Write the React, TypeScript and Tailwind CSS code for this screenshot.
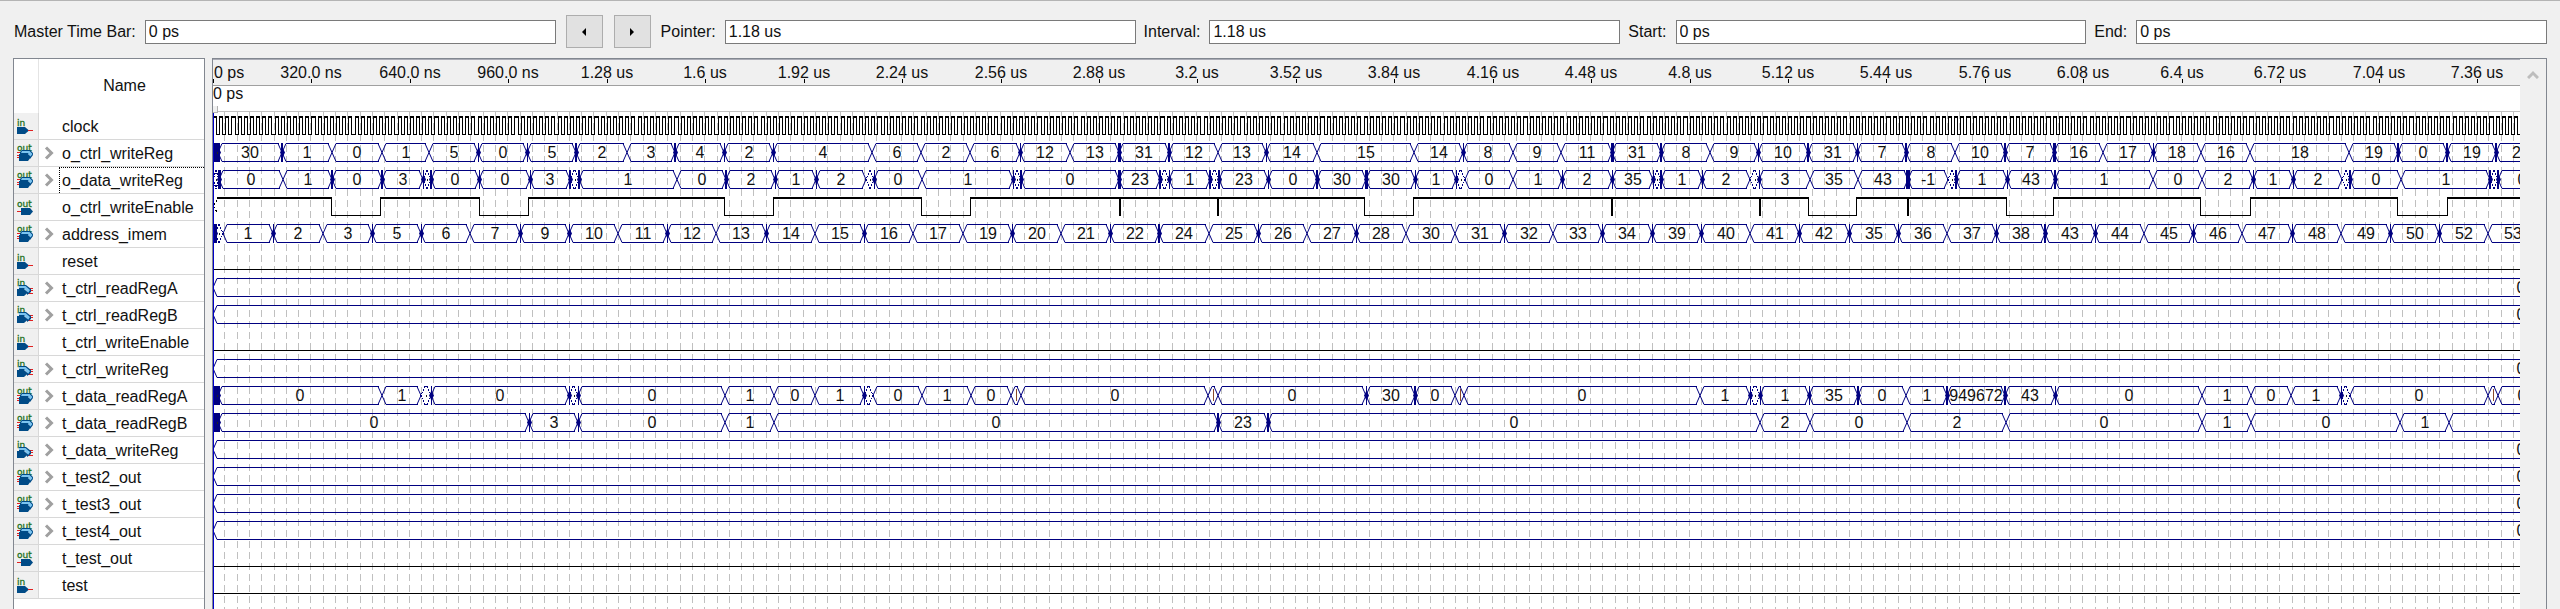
import React from "react";

type Dir = "in" | "out";
type Signal = {
  name: string;
  dir: Dir;
  bus?: boolean;
  wave: "clock" | "low" | "enable" | "bus";
  data?: string;
};

// Bus data alternates between transitions and values.
// "282:2" is a transition at x=282 with a burst of glitches 2 px wide.
// "*" is a value too narrow to show, "|" is a value cut down to one stroke.
const CONSTANT = "213 _ 2518 0 2524";

const SIGNALS: Signal[] = [
  { name: "clock", dir: "in", wave: "clock" },
  {
    name: "o_ctrl_writeReg",
    dir: "out",
    bus: true,
    wave: "bus",
    data: "215:3 * 218:3 30 282:2 1 332 0 382 1 429 5 478:1 0 527:1 5 576:2 2 627 3 675:2 4 724:1 2 773:1 4 872 6 921 2 970 6 1020:1 12 1070 13 1119:3 31 1169:2 12 1218 13 1266:1 14 1317 15 1414 14 1463:1 8 1513 9 1561 11 1612:3 31 1661:2 8 1710 9 1758:1 10 1808:2 31 1857:1 7 1906:2 8 1955 10 2005:2 7 2054:3 16 2103 17 2153:1 18 2201 16 2250 18 2349 19 2398:2 0 2447:2 19 2496:2 20 2545",
  },
  {
    name: "o_data_writeReg",
    dir: "out",
    bus: true,
    wave: "bus",
    data: "213 * 219:3 0 283 1 332:2 0 382:2 3 423:1 * 431:2 0 479:1 0 530:1 3 570:2 * 579:2 1 677 0 726:2 2 775:1 1 816:1 2 866 * 874:1 0 922 1 1013:1 * 1021:2 0 1119:3 23 1160:2 * 1169:1 1 1210:2 * 1219:2 23 1268:1 0 1317:2 30 1366:3 30 1415:1 1 1456:1 * 1465 0 1513 1 1562:1 2 1612:1 35 1653:1 * 1661:2 1 1702:1 2 1750 * 1759:1 3 1810 35 1858 43 1908:4 -1 1948 * 1956:2 1 2007:1 43 2055:2 1 2153 0 2202 2 2253:1 1 2293:1 2 2342 * 2350:2 0 2401 1 2490:2 * 2498:2 0 2546",
  },
  { name: "o_ctrl_writeEnable", dir: "out", wave: "enable" },
  {
    name: "address_imem",
    dir: "out",
    bus: true,
    wave: "bus",
    data: "215:3 * 223 1 273:1 2 323 3 372:1 5 421:1 6 470 7 520:1 9 569:1 10 618 11 667:1 12 716 13 766:1 14 815 15 864:1 16 913 17 963 19 1012:1 20 1061 21 1110:1 22 1159:2 24 1209 25 1258:1 26 1307 27 1356:1 28 1406 30 1455 31 1504:1 32 1553 33 1602:1 34 1652:1 39 1701:1 40 1750 41 1799:1 42 1849:1 35 1898:1 36 1947 37 1996:1 38 2045:2 43 2095:1 44 2144 45 2193:1 46 2242 47 2292:1 48 2341 49 2390:1 50 2439:1 52 2488 53 2537",
  },
  { name: "reset", dir: "in", wave: "low" },
  { name: "t_ctrl_readRegA", dir: "in", bus: true, wave: "bus", data: CONSTANT },
  { name: "t_ctrl_readRegB", dir: "in", bus: true, wave: "bus", data: CONSTANT },
  { name: "t_ctrl_writeEnable", dir: "in", wave: "low" },
  { name: "t_ctrl_writeReg", dir: "in", bus: true, wave: "bus", data: CONSTANT },
  {
    name: "t_data_readRegA",
    dir: "out",
    bus: true,
    wave: "bus",
    data: "215:3 * 218:3 0 382 1 421 * 431:1 0 569:1 * 578:1 0 725 1 774 0 815 1 864:1 * 873 0 922 1 971 0 1011 | 1021 0 1208 | 1218 0 1366:1 30 1415:2 0 1455 | 1464 0 1700 1 1750:1 * 1760:1 1 1809:1 35 1858:2 0 1906 1 1947:2 949672 2005:2 43 2055:1 0 2202 1 2251 0 2291 1 2341:1 * 2350 0 2488 | 2498 0 2546",
  },
  {
    name: "t_data_readRegB",
    dir: "out",
    bus: true,
    wave: "bus",
    data: "215:3 * 218:3 0 529:1 3 578:1 0 725 1 774 0 1218:2 23 1268:2 0 1760 2 1810 0 1907 2 2006 0 2202 1 2251 0 2400 1 2449 _ 2700",
  },
  { name: "t_data_writeReg", dir: "in", bus: true, wave: "bus", data: CONSTANT },
  { name: "t_test2_out", dir: "out", bus: true, wave: "bus", data: CONSTANT },
  { name: "t_test3_out", dir: "out", bus: true, wave: "bus", data: CONSTANT },
  { name: "t_test4_out", dir: "out", bus: true, wave: "bus", data: CONSTANT },
  { name: "t_test_out", dir: "out", wave: "low" },
  { name: "test", dir: "in", wave: "low" },
];

const ORIGIN = 213;
const ROW = 27;
const HI = 4;
const LO = 22;
const END = 2700;
const STEP = 98.44; // pixels for 320 ns
const NAVY = "#000080";
const FONT = "'Liberation Sans', Arial, sans-serif";

const TIMES = [
  "0 ps", "320.0 ns", "640.0 ns", "960.0 ns", "1.28 us", "1.6 us", "1.92 us", "2.24 us",
  "2.56 us", "2.88 us", "3.2 us", "3.52 us", "3.84 us", "4.16 us", "4.48 us", "4.8 us",
  "5.12 us", "5.44 us", "5.76 us", "6.08 us", "6.4 us", "6.72 us", "7.04 us", "7.36 us",
];

// Intervals in which the write enable is low.
const ENABLE_LOW = [
  [331, 380], [479, 528], [724, 773], [921, 970], [1119, 1119], [1217, 1218], [1364, 1413],
  [1611, 1611], [1759, 1759], [1808, 1856], [1907, 1907], [2006, 2053], [2200, 2250], [2397, 2447],
];

function BusWave({ data, y }: { data: string; y: number }) {
  const tokens = data.split(" ");
  const edges: { x: number; w: number }[] = [];
  const values: string[] = [];
  tokens.forEach((t, i) => {
    if (i % 2 === 0) {
      const [x, w] = t.split(":");
      edges.push({ x: Number(x) - ORIGIN, w: w ? Number(w) : 0 });
    } else values.push(t);
  });
  const constant = values[0] === "_";
  if (constant) edges[1].x = END;
  const hi = y + HI + 0.5;
  const lo = y + LO + 0.5;
  const mid = (hi + lo) / 2;
  let rails = "";
  let slopes = "";
  let dotted = "";
  values.forEach((v, i) => {
    if (constant && i > 0) return;
    const a = edges[i].x;
    const b = edges[i + 1].x;
    const s = Math.min(4, (b - a) / 2);
    rails += `M${a + s} ${hi}H${b - s + 1}M${a + s} ${lo}H${b - s + 1}`;
    const ends = `M${a + s} ${hi}L${a} ${mid}L${a + s} ${lo}M${b - s} ${hi}L${b} ${mid}L${b - s} ${lo}`;
    if (v === "*") dotted += ends;
    else slopes += ends;
  });
  return (
    <g>
      <g fill="none" stroke={NAVY} shapeRendering="crispEdges">
        <path d={rails} />
        <path d={dotted} strokeDasharray="2 1" />
      </g>
      <path d={slopes} fill="none" stroke={NAVY} />
      {edges.map((e, i) =>
        e.w > 0 ? (
          <g key={i} fill={NAVY}>
            <rect x={e.x - Math.floor(e.w / 2)} y={y + HI} width={e.w} height={LO - HI + 1} shapeRendering="crispEdges" />
            <path d={`M${e.x - 2} ${mid}L${e.x + 0.5} ${mid - 5}L${e.x + 3} ${mid}L${e.x + 0.5} ${mid + 5}Z`} />
          </g>
        ) : null,
      )}
      {values.map((v, i) => {
        if (v === "_") return null;
        if (constant)
          return (
            <text key={i} x={2521 - ORIGIN} y={y + 19} textAnchor="middle">
              {v}
            </text>
          );
        const c = Math.round((edges[i].x + edges[i + 1].x) / 2);
        if (v === "*") return <rect key={i} x={c} y={y + 13} width="1" height="2" fill="#222" />;
        if (v === "|") return <rect key={i} x={c} y={y + 7} width="1" height="12" fill="#8a4a2a" />;
        return (
          <text key={i} x={c} y={y + 19} textAnchor="middle">
            {v}
          </text>
        );
      })}
    </g>
  );
}

function ClockWave({ y }: { y: number }) {
  let tops = "M0 0";
  let edges = "M0 0";
  const hi = y + HI;
  const lo = y + LO;
  const half = STEP / 32;
  for (let k = 0; k < 800; k += 2) {
    const a = Math.round(k * half);
    const b = Math.round((k + 1) * half);
    const c = Math.round((k + 2) * half);
    tops += `M${a} ${hi + 1}H${b + 1}`;
    edges += `M${b + 0.5} ${hi}V${lo + 0.5}H${c + 0.5}V${hi}`;
  }
  return (
    <g fill="none" stroke="#000" shapeRendering="crispEdges">
      <path d={tops} strokeWidth="2" />
      <path d={edges} />
    </g>
  );
}

function EnableWave({ y }: { y: number }) {
  const hi = y + HI;
  const lo = y + LO + 0.5;
  let tops = `M4 ${hi + 1}`;
  let edges = "";
  ENABLE_LOW.forEach(([p, q]) => {
    const a = p - ORIGIN;
    const b = q - ORIGIN + (p === q ? 1 : 0);
    tops += `H${a + 1}M${b} ${hi + 1}`;
    edges += `M${a + 0.5} ${hi}V${lo}H${b + 0.5}V${hi}`;
  });
  tops += `H${END}`;
  return (
    <g fill="none" stroke="#000" shapeRendering="crispEdges">
      <path d={tops} strokeWidth="2" />
      <path d={edges} />
      <path d={`M4 ${hi + 3}L0 ${y + 13}L4 ${y + 19}`} strokeDasharray="2 2" />
    </g>
  );
}

function Waves() {
  const height = SIGNALS.length * ROW + 11;
  let grid = "";
  for (let k = 1; k < 210; k++) grid += `M${Math.round((k * STEP) / 8) - 0.5} 0V${height}`;
  return (
    <svg className="block w-full" height={height} fontFamily={FONT} fontSize="16" fill="#111" role="img" aria-label="Signal waveforms">
      <path d={grid} stroke="#c0c0c0" strokeDasharray="7 4" shapeRendering="crispEdges" />
      {SIGNALS.map((s, i) => {
        const y = i * ROW;
        if (s.wave === "clock") return <ClockWave key={s.name} y={y} />;
        if (s.wave === "enable") return <EnableWave key={s.name} y={y} />;
        if (s.wave === "low")
          return <path key={s.name} d={`M0 ${y + LO + 0.5}H${END}`} stroke="#000" shapeRendering="crispEdges" />;
        return <BusWave key={s.name} data={s.data as string} y={y} />;
      })}
      <path d={`M0.5 0V${height}`} stroke="#0000c8" shapeRendering="crispEdges" />
    </svg>
  );
}

function Ruler() {
  return (
    <svg className="block h-[25px] w-full shrink-0" fontFamily={FONT} fontSize="16" fill="#111" role="img" aria-label="Time scale">
      {TIMES.map((t, i) => {
        const x = Math.round(i * STEP);
        return (
          <g key={t}>
            <path d={`M${x + 0.5} 19V23`} stroke="#000" shapeRendering="crispEdges" />
            <text x={i === 0 ? 1 : x} y="18" textAnchor={i === 0 ? "start" : "middle"}>
              {t}
            </text>
          </g>
        );
      })}
    </svg>
  );
}

function PinIcon({ dir, bus }: { dir: Dir; bus?: boolean }) {
  const left = dir === "in";
  const dark = "#004b87";
  return (
    <svg className="block h-[26px] w-[24px]" viewBox="0 0 24 26" aria-hidden="true">
      <text x="3" y={bus ? 11 : 13} fontFamily="'DejaVu Sans', sans-serif" fontSize="9" fill="#1f7020" stroke="#1f7020" strokeWidth="0.3">
        {dir}
      </text>
      {!bus && left && (
        <>
          <path d="M3 14H11L15 17.5L11 21H3Z" fill={dark} />
          <path d="M14 17.5H19" stroke="#e02020" />
        </>
      )}
      {!bus && !left && (
        <>
          <path d="M3 17.5H8" stroke="#e02020" />
          <path d="M7 14H16L19 17.5L16 21H7Z" fill={dark} />
        </>
      )}
      {bus && left && (
        <>
          <path d="M14 13.5H19M14 15.5H19M14 18.5H19" stroke="#e02020" />
          <path d="M5 10H12L17 14V17L13 20V14H5Z" fill={dark} />
          <path d="M5 11H11.5L16 15L14 18L10 13H5Z" fill="#7cc4f0" />
          <path d="M3 14H10L14 17.5L10 21H3Z" fill={dark} />
        </>
      )}
      {bus && !left && (
        <>
          <path d="M3 12.5H8M3 15.5H8M3 17.5H8" stroke="#e02020" />
          <path d="M8 10H16L19 13V15L16 19V14H6V12Z" fill={dark} />
          <path d="M8 11H15.5L18.5 14L16 17L14 13H7Z" fill="#7cc4f0" />
          <path d="M5 14H14L17 17L14 21H5Z" fill={dark} />
        </>
      )}
    </svg>
  );
}

function SignalRow({ signal, focused }: { signal: Signal; focused: boolean }) {
  return (
    <li className="flex h-[27px]">
      <div className="w-[25px] shrink-0 border-r border-b border-[#d8d8d8] bg-[#f0f0f0]">
        <PinIcon dir={signal.dir} bus={signal.bus} />
      </div>
      <div className="flex min-w-0 flex-1 border-b border-[#d8d8d8]">
        <div className="flex w-5 shrink-0 items-center justify-center">
          {signal.bus && (
            <button type="button" aria-label={`Expand ${signal.name}`} className="block">
              <svg className="block" width="10" height="14" viewBox="0 0 10 14" fill="none" stroke="#a0a0a0" strokeWidth="3">
                <path d="M2 1.5L7.5 7L2 12.5" />
              </svg>
            </button>
          )}
        </div>
        <span
          className={
            focused
              ? "block min-w-0 flex-1 border-t border-l border-dotted border-black pl-0.5 leading-[26px] whitespace-nowrap"
              : "block min-w-0 flex-1 pl-[3px] leading-[28px] whitespace-nowrap"
          }
        >
          {signal.name}
        </span>
      </div>
    </li>
  );
}

function TimeField({ id, label, value }: { id: string; label: string; value: string }) {
  return (
    <div className="flex min-w-0 grow shrink basis-auto items-center gap-[9px]">
      <label htmlFor={id} className="shrink-0 whitespace-nowrap">
        {label}
      </label>
      <input
        id={id}
        type="text"
        defaultValue={value}
        className="h-6 w-40 min-w-0 flex-auto border border-[#7a7a7a] bg-white px-[3px] outline-none"
      />
    </div>
  );
}

function StepButton({ label, d }: { label: string; d: string }) {
  return (
    <button type="button" aria-label={label} className="flex h-[33px] w-[37px] shrink-0 items-center justify-center border border-[#adadad] bg-[#e1e1e1]">
      <svg width="8" height="8" viewBox="0 0 8 8" className="block">
        <path d={d} fill="#000" />
      </svg>
    </button>
  );
}

export default function App() {
  return (
    <div className="flex min-h-screen flex-col border-t border-[#b4b4b4] bg-[#f0f0f0] font-['Liberation_Sans',Arial,sans-serif] text-base leading-5 text-[#111]">
      <header className="flex items-center gap-2 pt-[14px] pr-[13px] pb-[10px] pl-[14px]">
        <TimeField id="master" label="Master Time Bar:" value="0 ps" />
        <div className="mx-0.5 flex gap-[11px]">
          <StepButton label="Previous transition" d="M6 0V8L2 4Z" />
          <StepButton label="Next transition" d="M2 0V8L6 4Z" />
        </div>
        <TimeField id="pointer" label="Pointer:" value="1.18 us" />
        <TimeField id="interval" label="Interval:" value="1.18 us" />
        <TimeField id="start" label="Start:" value="0 ps" />
        <TimeField id="end" label="End:" value="0 ps" />
      </header>

      <main className="flex flex-1 gap-[7px] px-[13px]">
        <section className="flex w-48 shrink-0 flex-col border-x border-t border-[#828790] bg-white">
          <div className="flex h-[54px]">
            <div className="w-[25px] shrink-0 border-r border-[#e4e4e4]" />
            <div className="flex flex-1 items-center justify-center pl-1.5">Name</div>
          </div>
          <ul>
            {SIGNALS.map((s, i) => (
              <SignalRow key={s.name} signal={s} focused={i === 2} />
            ))}
          </ul>
        </section>

        <section className="flex min-w-0 flex-1 border-x border-t border-[#828790]">
          <div className="flex min-w-0 flex-1 flex-col bg-white">
            <div className="border-t border-b border-t-[#a9abb5] border-b-[#a0a0a0] bg-[#f0f0f0]">
              <Ruler />
            </div>
            <div className="relative h-[26px] border-b border-[#c0c0c0] leading-[15px]">
              0 ps
              <div className="absolute -bottom-0.5 left-0 h-[7px] w-[5px] border-r border-b border-[#b0b0b0] bg-[#f0f0f0]" />
            </div>
            <Waves />
          </div>
          <div className="flex w-[26px] shrink-0 justify-center bg-[#f0f0f0] pt-[11px]">
            <button type="button" aria-label="Scroll up" className="h-[9px]">
              <svg className="block" width="12" height="9" viewBox="0 0 12 9" fill="none" stroke="#bdbdbd" strokeWidth="3">
                <path d="M1 8L6 3L11 8" />
              </svg>
            </button>
          </div>
        </section>
      </main>
    </div>
  );
}
